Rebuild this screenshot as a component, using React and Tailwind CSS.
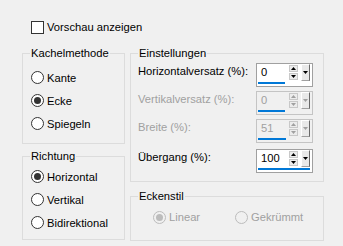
import React from "react";

function Radio({ label, checked, disabled, className = "" }) {
  return (
    <div className={"flex items-center " + className}>
      <span
        className={
          "w-[13px] h-[13px] rounded-full border flex items-center justify-center shrink-0 " +
          (disabled ? "border-[#bcbcbc] bg-[#f0f0f0]" : "border-[#333333] bg-white")
        }
      >
        {checked && (
          <span
            className={
              "w-[7px] h-[7px] rounded-full " + (disabled ? "bg-[#bcbcbc]" : "bg-[#333333]")
            }
          />
        )}
      </span>
      <span className={"ml-[3px] leading-[16px] " + (disabled ? "text-[#a0a0a0]" : "text-black")}>
        {label}
      </span>
    </div>
  );
}

function Group({ title, className = "", children }) {
  return (
    <fieldset className={"border border-[#dcdcdc] min-w-0 " + className}>
      <legend className="ml-[7px] px-[1px] leading-[16px] text-black">{title}</legend>
      {children}
    </fieldset>
  );
}

function Tri({ up, color }) {
  return (
    <svg width="5" height="3" viewBox="0 0 5 3" className="block">
      <polygon points={up ? "0,3 5,3 2.5,0" : "0,0 5,0 2.5,3"} fill={color} />
    </svg>
  );
}

function Spin({ value, bar, disabled }) {
  const fg = disabled ? "#a0a0a0" : "#000000";
  return (
    <div
      className={
        "w-[57px] h-[24px] border flex flex-col shrink-0 " +
        (disabled ? "border-[#c4c4c4] bg-[#f0f0f0]" : "border-[#a0a0a0] bg-white")
      }
    >
      <div className="flex h-[17px] items-stretch">
        <div
          className={
            "w-[32px] pl-[4px] leading-[17px] " + (disabled ? "text-[#a0a0a0]" : "text-black")
          }
        >
          {value}
        </div>
        <div className="w-[9px] flex flex-col pt-[1px] gap-[1px]">
          <div className="h-[7px] border border-[#c8c8c8] bg-[#ececec] flex items-center justify-center">
            <Tri up color={fg} />
          </div>
          <div className="h-[7px] border border-[#c8c8c8] bg-[#ececec] flex items-center justify-center">
            <Tri color={fg} />
          </div>
        </div>
        <div className="ml-[3px] w-[9px] border-t border-l border-t-white border-l-white border-r border-b border-r-[#696969] border-b-[#a0a0a0] bg-[#e9e9e9] flex items-center justify-center">
          <Tri color={fg} />
        </div>
      </div>
      <div className="mt-[1px] ml-[1px] h-[2px] bg-[#0078d7]" style={{ width: bar }} />
    </div>
  );
}

function Row({ label, value, bar, disabled, className = "" }) {
  return (
    <div className={"flex items-start justify-between " + className}>
      <span className={"leading-[16px] " + (disabled ? "text-[#a0a0a0]" : "text-black")}>
        {label}
      </span>
      <Spin value={value} bar={bar} disabled={disabled} />
    </div>
  );
}

export default function App() {
  return (
    <div
      className="w-[343px] h-[246px] bg-[#f0f0f0] text-black text-[11.2px] overflow-hidden"
      style={{ fontFamily: "'Liberation Sans', Arial, sans-serif" }}
    >
      <div className="pt-[21px] pl-[31px] flex items-center">
        <span className="w-[13px] h-[13px] border border-[#333333] bg-white shrink-0" />
        <span className="ml-[3px] leading-[13px]">Vorschau anzeigen</span>
      </div>
      <div className="flex pl-[22px] gap-[5px] mt-[11px]">
        <div className="w-[103px] flex flex-col gap-[4px]">
          <Group title="Kachelmethode" className="h-[99px]">
            <div className="pt-[5px] pl-[8px] flex flex-col">
              <Radio label="Kante" className="h-[23px]" />
              <Radio label="Ecke" checked className="h-[23px]" />
              <Radio label="Spiegeln" className="h-[23px]" />
            </div>
          </Group>
          <Group title="Richtung" className="h-[92px]">
            <div className="pt-[1px] pl-[8px] flex flex-col">
              <Radio label="Horizontal" checked className="h-[23px]" />
              <Radio label="Vertikal" className="h-[23px]" />
              <Radio label="Bidirektional" className="h-[23px]" />
            </div>
          </Group>
        </div>
        <div className="w-[194px] flex flex-col gap-[6px]">
          <Group title="Einstellungen" className="h-[137px]">
            <div className="pt-[2px] pl-[7px] pr-[10px] flex flex-col">
              <Row label="Horizontalversatz (%):" value="0" bar="27px" />
              <Row label="Vertikalversatz (%):" value="0" bar="27px" disabled className="mt-[4px]" />
              <Row label="Breite (%):" value="51" bar="28px" disabled className="mt-[4px]" />
              <Row label="Übergang (%):" value="100" bar="52px" className="mt-[6px]" />
            </div>
          </Group>
          <Group title="Eckenstil" className="h-[53px]">
            <div className="pl-[22px] h-[26px] flex items-center">
              <Radio label="Linear" checked disabled className="w-[82px]" />
              <Radio label="Gekrümmt" disabled />
            </div>
          </Group>
        </div>
      </div>
    </div>
  );
}
